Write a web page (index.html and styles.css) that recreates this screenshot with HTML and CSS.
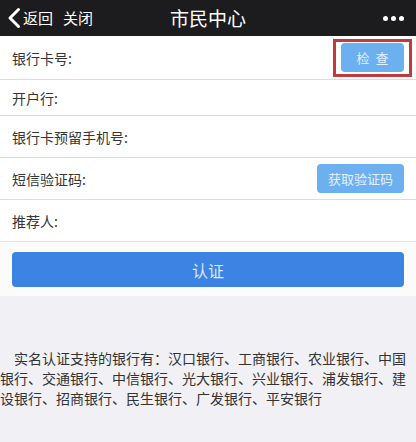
FILE: index.html
```html
<!DOCTYPE html>
<html lang="zh">
<head>
<meta charset="utf-8">
<link rel="stylesheet" href="styles.css">
</head>
<body>
<header class="topbar">
  <div class="nav-left">
    <svg class="back-icon" width="14" height="22" viewBox="0 0 14 22"><polyline points="11.5,2.5 3,11 11.5,19.5" fill="none" stroke="#fff" stroke-width="3" stroke-linecap="round" stroke-linejoin="round"/></svg>
    <span class="nav-link">返回</span>
    <span class="nav-link close">关闭</span>
  </div>
  <div class="title">市民中心</div>
  <div class="more"><span class="dot"></span><span class="dot"></span><span class="dot"></span></div>
</header>
<main>
  <div class="form">
    <div class="row row-tall">
      <span class="label">银行卡号:</span>
      <span class="check-wrap"><button class="btn-light btn-check">检&nbsp;&nbsp;查</button><span class="highlight"></span></span>
    </div>
    <div class="row row-short"><span class="label">开户行:</span></div>
    <div class="row"><span class="label">银行卡预留手机号:</span></div>
    <div class="row"><span class="label">短信验证码:</span><button class="btn-light btn-code">获取验证码</button></div>
    <div class="row"><span class="label">推荐人:</span></div>
  </div>
  <div class="submit-area"><button class="btn-submit">认证</button></div>
  <div class="notice">
    <p>实名认证支持的银行有：汉口银行、工商银行、农业银行、中国银行、交通银行、中信银行、光大银行、兴业银行、浦发银行、建设银行、招商银行、民生银行、广发银行、平安银行</p>
  </div>
</main>
</body>
</html>
```
FILE: styles.css
```css
* { box-sizing: border-box; }
html, body { margin: 0; padding: 0; }
body {
  width: 416px;
  height: 442px;
  overflow: hidden;
  background: #f1f0f4;
  font-family: "Noto Sans CJK SC", "Noto Sans", sans-serif;
  color: #333;
}
.topbar {
  height: 36px;
  background: #1c1b1e;
  color: #fff;
  display: flex;
  align-items: center;
  justify-content: space-between;
  padding: 0 12px 0 7px;
  position: relative;
}
.nav-left { display: flex; align-items: center; }
.back-icon { display: block; margin-right: 2px; }
.nav-link { font-size: 15px; line-height: 20px; }
.nav-link.close { margin-left: 10px; }
.title {
  position: absolute;
  left: 0; right: 0;
  text-align: center;
  font-size: 19px;
  line-height: 36px;
  pointer-events: none;
}
.more { display: flex; gap: 3px; align-items: center; }
.dot { width: 5px; height: 5px; border-radius: 50%; background: #fff; display: block; }
.form { background: #fff; }
.row {
  height: 42px;
  display: flex;
  align-items: center;
  justify-content: space-between;
  padding: 0 12px;
  border-bottom: 1px solid #dcdcdc;
  font-size: 14px;
}
.row-tall { height: 44px; }
.row-short { height: 36px; }
.row:last-child { border-bottom: 1px solid #e6e4dc; }
.label { color: #363636; }
.btn-light {
  border: none;
  background: #6db0f0;
  color: #e2f0ff;
  border-radius: 4px;
  font-family: inherit;
  font-size: 13px;
  height: 29px;
  padding: 0;
}
.btn-check { width: 63px; }
.btn-code { width: 87px; }
.check-wrap { position: relative; display: block; height: 29px; }
.highlight {
  position: absolute;
  left: -8px; top: -4px; right: -8px; bottom: -5px;
  border: 3px solid #c13a3e;
}
.submit-area {
  background: #fbfbfa;
  padding: 10px 12px 9px;
}
.btn-submit {
  display: block;
  width: 100%;
  height: 35px;
  border: none;
  border-radius: 4px;
  background: #3d83e4;
  color: #dbe9fb;
  font-family: inherit;
  font-size: 16px;
}
.notice { padding-top: 52px; }
.notice p {
  margin: 0;
  font-size: 14px;
  line-height: 20px;
  text-indent: 14px;
  color: #333;
}
```
